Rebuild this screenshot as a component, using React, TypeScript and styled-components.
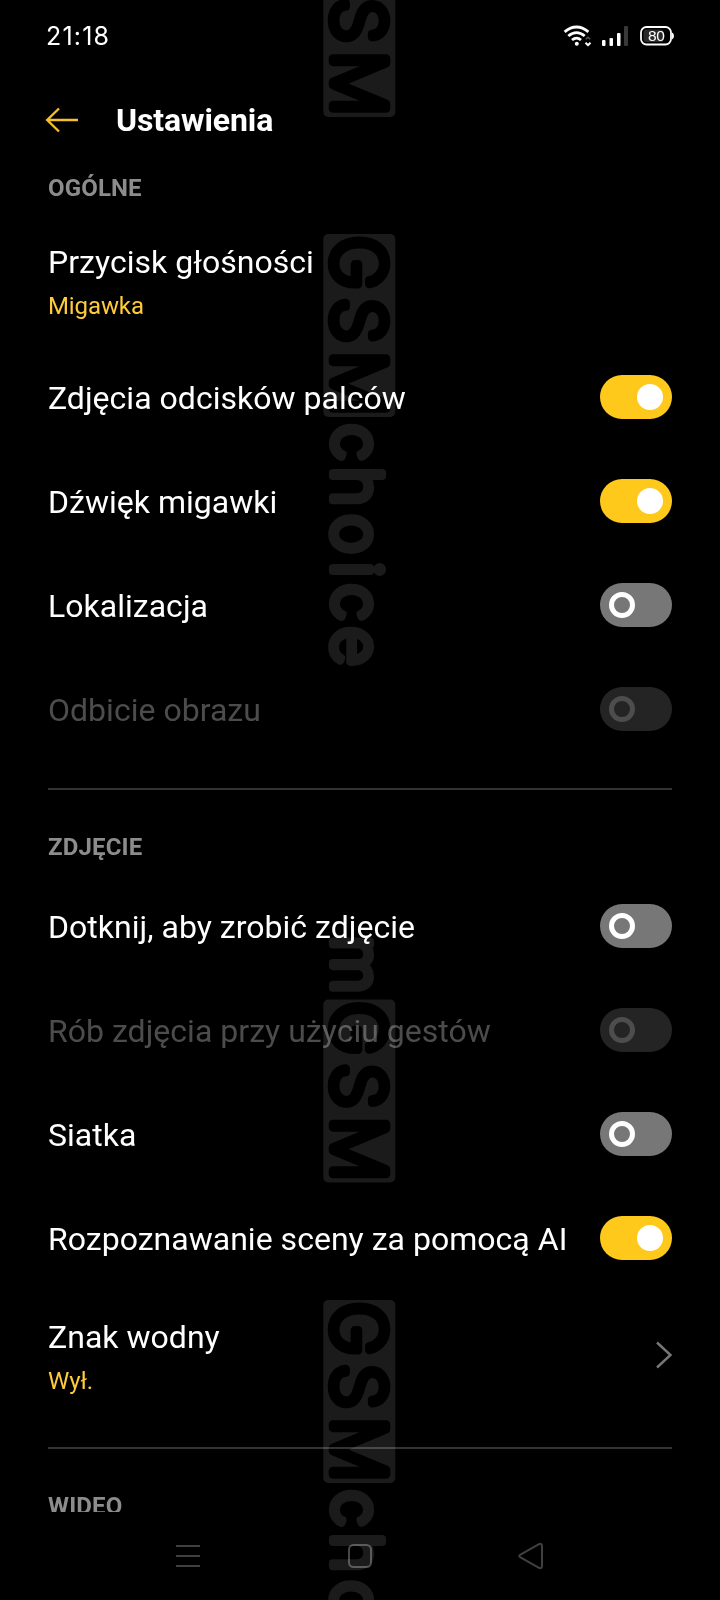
import React from "react";
import styled, { createGlobalStyle } from "styled-components";

const Global = createGlobalStyle`
  * { box-sizing: border-box; }
  body { margin: 0; background: #000; font-family: Roboto, "Liberation Sans", sans-serif; }
`;

const Screen = styled.div`
  position: relative;
  width: 720px;
  height: 1600px;
  overflow: hidden;
  display: flex;
  flex-direction: column;
  background: #000;
  color: #fff;
`;
const StatusBar = styled.header`
  height: 72px;
  flex: none;
  padding: 0 46px;
  display: flex;
  align-items: center;
  justify-content: space-between;
`;
const Clock = styled.span`
  font: 400 25px/30px Inter, sans-serif;
  letter-spacing: 1.2px;
`;
const AppBar = styled.div`
  height: 96px;
  flex: none;
  padding: 0 45px;
  display: flex;
  align-items: center;
  gap: 38px;
`;
const Title = styled.h1`
  margin: 0;
  font-size: 32px;
  line-height: 38px;
  font-weight: 700;
  letter-spacing: -0.1px;
`;
const List = styled.main`
  height: 1344px;
  flex: none;
  padding: 0 48px;
  overflow: hidden;
`;
const Section = styled.section<{ $first?: boolean }>`
  padding-top: ${(p) => (p.$first ? 0 : 37)}px;
`;
const Heading = styled.h2`
  margin: 0;
  height: 40px;
  font-size: 24px;
  line-height: 40px;
  font-weight: 700;
  letter-spacing: 0.15px;
  color: #8c8c8c;
`;
const Row = styled.div<{ $h?: number; $disabled?: boolean }>`
  height: ${(p) => p.$h ?? 104}px;
  display: flex;
  align-items: center;
  justify-content: space-between;
  color: ${(p) => (p.$disabled ? "#4c4c4c" : "#fff")};
`;
const Label = styled.div`
  padding-top: 2px;
  font-size: 32px;
  line-height: 38px;
  letter-spacing: 0.02px;
  white-space: nowrap;
`;
const Value = styled.div`
  padding-top: 11px;
  margin-bottom: -1px;
  font-size: 24px;
  line-height: 28px;
  letter-spacing: -0.1px;
  color: #ffcb3a;
`;
const Gap = styled.div<{ $h: number }>`
  height: ${(p) => p.$h}px;
`;
const Divider = styled.hr`
  margin: 0;
  border: 0;
  height: 2px;
  background: #333;
`;
const Switch = styled.span<{ $on?: boolean; $disabled?: boolean }>`
  width: 72px;
  height: 44px;
  flex: none;
  padding: 0 9px;
  border-radius: 22px;
  display: flex;
  align-items: center;
  justify-content: ${(p) => (p.$on ? "flex-end" : "flex-start")};
  background: ${(p) => (p.$on ? "#ffc91c" : p.$disabled ? "#242424" : "#777")};
`;
const Thumb = styled.span<{ $on?: boolean; $disabled?: boolean }>`
  width: 26px;
  height: 26px;
  border-radius: 50%;
  border: 5px solid ${(p) => (p.$disabled ? "#4d4d4d" : "#fff")};
  background: ${(p) => (p.$on ? "#fff" : "transparent")};
`;
const NavBar = styled.nav`
  flex: 1;
  padding: 0 175px;
  display: flex;
  align-items: center;
  justify-content: space-between;
`;
const Watermark = styled.svg`
  position: absolute;
  inset: 0;
  mix-blend-mode: screen;
  pointer-events: none;
`;

type ToggleProps = { label: string; on?: boolean; disabled?: boolean };
const ToggleRow = ({ label, on, disabled }: ToggleProps) => (
  <Row $disabled={disabled}>
    <Label>{label}</Label>
    <Switch $on={on} $disabled={disabled}>
      <Thumb $on={on} $disabled={disabled} />
    </Switch>
  </Row>
);

const StatusIcons = () => (
  <svg width="112" height="24" viewBox="0 0 112 24" fill="none">
    <g stroke="#fff" strokeWidth="2.8">
      <path d="M2.6 7.8Q14.5-1.8 26.4 7.8" />
      <path d="M6.3 12Q14.5 5.2 22.7 12" />
      <path d="M10 16Q14.5 12.2 19 16" />
    </g>
    <circle cx="14.8" cy="19.8" r="2" fill="#fff" />
    <path d="m23.5 18.8 2.5 2.4 2.5-2.4" stroke="#fff" strokeWidth="2" />
    <path d="m23.7 15.2 2.3-2 2.3 2" stroke="#555" strokeWidth="1.4" />
    <g fill="#fff">
      <rect x="40" y="16" width="3.5" height="6" rx="1" />
      <rect x="47.5" y="14" width="3.5" height="8" rx="1" />
      <rect x="55" y="9" width="3.5" height="13" rx="1" />
    </g>
    <rect x="62" y="2" width="4" height="20" rx="1" fill="#383838" />
    <rect x="79" y="3" width="30" height="17.5" rx="5.5" stroke="#fff" strokeWidth="1.8" />
    <rect x="81.5" y="5.5" width="20" height="12.5" rx="3" fill="#2a2a2a" />
    <path d="M110 8.5Q112 9 112 12Q112 15 110 15.5Z" fill="#fff" />
    <text x="94.3" y="17.2" fontSize="15.5" letterSpacing="-0.4" fontFamily="Liberation Sans" textAnchor="middle" fill="#fff">80</text>
  </svg>
);

const INK = "#1b1b1b";
/* Drawn along the x axis; the parent group turns it to run down the screen. */
const Badge = ({ at }: { at: number }) => (
  <g transform={`translate(${at} 0)`}>
    <rect x="0" y="-72" width="183" height="72" rx="5" fill={INK} />
    <text x="2 64 117" y="-10" fontSize="72.5" strokeWidth="8.6" fill="#000" stroke="#000">GSM</text>
  </g>
);
const Choice = ({ at }: { at: number }) => (
  <text x={[3, 46, 93.5, 141, 163, 206].map((x) => x + at).join(" ")} y="-9.8" fill={INK} stroke={INK}>
    choice
  </text>
);

export default function App() {
  return (
    <Screen>
      <Global />
      <StatusBar>
        <Clock>21:18</Clock>
        <StatusIcons />
      </StatusBar>
      <AppBar>
        <svg width="33" height="26" viewBox="0 0 33 26" fill="none" stroke="#f5bf2c" strokeWidth="2.4">
          <path d="M14 1.5 2.2 13 14 24.5M2 13H33" />
        </svg>
        <Title>Ustawienia</Title>
      </AppBar>
      <List>
        <Section $first>
          <Heading>OGÓLNE</Heading>
          <Gap $h={6} />
          <Row $h={131}>
            <div>
              <Label>Przycisk głośności</Label>
              <Value>Migawka</Value>
            </div>
          </Row>
          <ToggleRow label="Zdjęcia odcisków palców" on />
          <ToggleRow label="Dźwięk migawki" on />
          <ToggleRow label="Lokalizacja" />
          <ToggleRow label="Odbicie obrazu" disabled />
          <Gap $h={27} />
          <Divider />
        </Section>
        <Section>
          <Heading>ZDJĘCIE</Heading>
          <Gap $h={7} />
          <ToggleRow label="Dotknij, aby zrobić zdjęcie" />
          <ToggleRow label="Rób zdjęcia przy użyciu gestów" disabled />
          <ToggleRow label="Siatka" />
          <ToggleRow label="Rozpoznawanie sceny za pomocą AI" on />
          <Row $h={130}>
            <div>
              <Label>Znak wodny</Label>
              <Value>Wył.</Value>
            </div>
            <svg width="16" height="28" viewBox="0 0 16 28" fill="none" stroke="#777" strokeWidth="2.4">
              <path d="M1 1.5 14.5 14 1 26.5" />
            </svg>
          </Row>
          <Gap $h={27} />
          <Divider />
        </Section>
        <Section>
          <Heading>WIDEO</Heading>
        </Section>
      </List>
      <NavBar>
        <svg width="28" height="26" viewBox="0 0 28 26" stroke="#404040" strokeWidth="2">
          <path d="M1 3h24M1 13h24M1 23h24" />
        </svg>
        <svg width="26" height="26" viewBox="0 0 26 26" fill="none" stroke="#484848" strokeWidth="2">
          <rect x="2" y="2" width="22" height="22" rx="4.5" />
        </svg>
        <svg width="28" height="28" viewBox="0 0 28 28" fill="none" stroke="#404040" strokeWidth="2">
          <path d="M3.5 12.6 22 2.2Q25 1 25 4V24Q25 27 22 25.8L3.5 15.4Q1 14 3.5 12.6Z" />
        </svg>
      </NavBar>
      <Watermark width="720" height="1600" viewBox="0 0 720 1600">
        <g
          transform="translate(323.3 0) rotate(90)"
          fontFamily="Inter"
          fontWeight="200"
          fontSize="67"
          strokeWidth="8.2"
          strokeLinejoin="round"
        >
          <Badge at={-66} />
          <Badge at={234} />
          <Choice at={421} />
          <text x="935.5" y="-9.8" fill={INK} stroke={INK}>m</text>
          <Badge at={999.5} />
          <Badge at={1300} />
          <Choice at={1487} />
        </g>
      </Watermark>
    </Screen>
  );
}
